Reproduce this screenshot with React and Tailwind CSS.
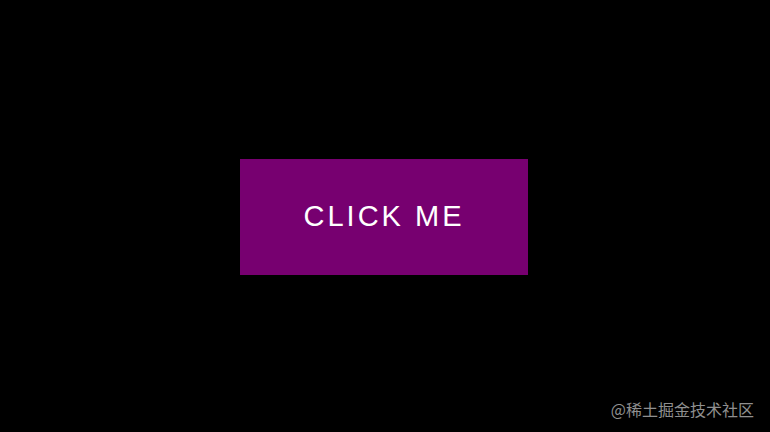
import React from "react";

export default function App() {
  return (
    <div className="relative w-[770px] h-[432px] bg-black flex items-center justify-center font-['Liberation_Sans',sans-serif]">
      {/* Main button */}
      <button className="w-[288px] h-[116px] mt-[2px] mr-[2px] bg-[#770070] text-white text-[29px] tracking-[3px] uppercase">
        Click me
      </button>

      {/* Watermark */}
      <span className="absolute right-[16px] bottom-[15px] text-[16px] leading-none text-[#8f8f8f] font-['Noto_Sans_CJK_SC',sans-serif]">
        @稀土掘金技术社区
      </span>
    </div>
  );
}
